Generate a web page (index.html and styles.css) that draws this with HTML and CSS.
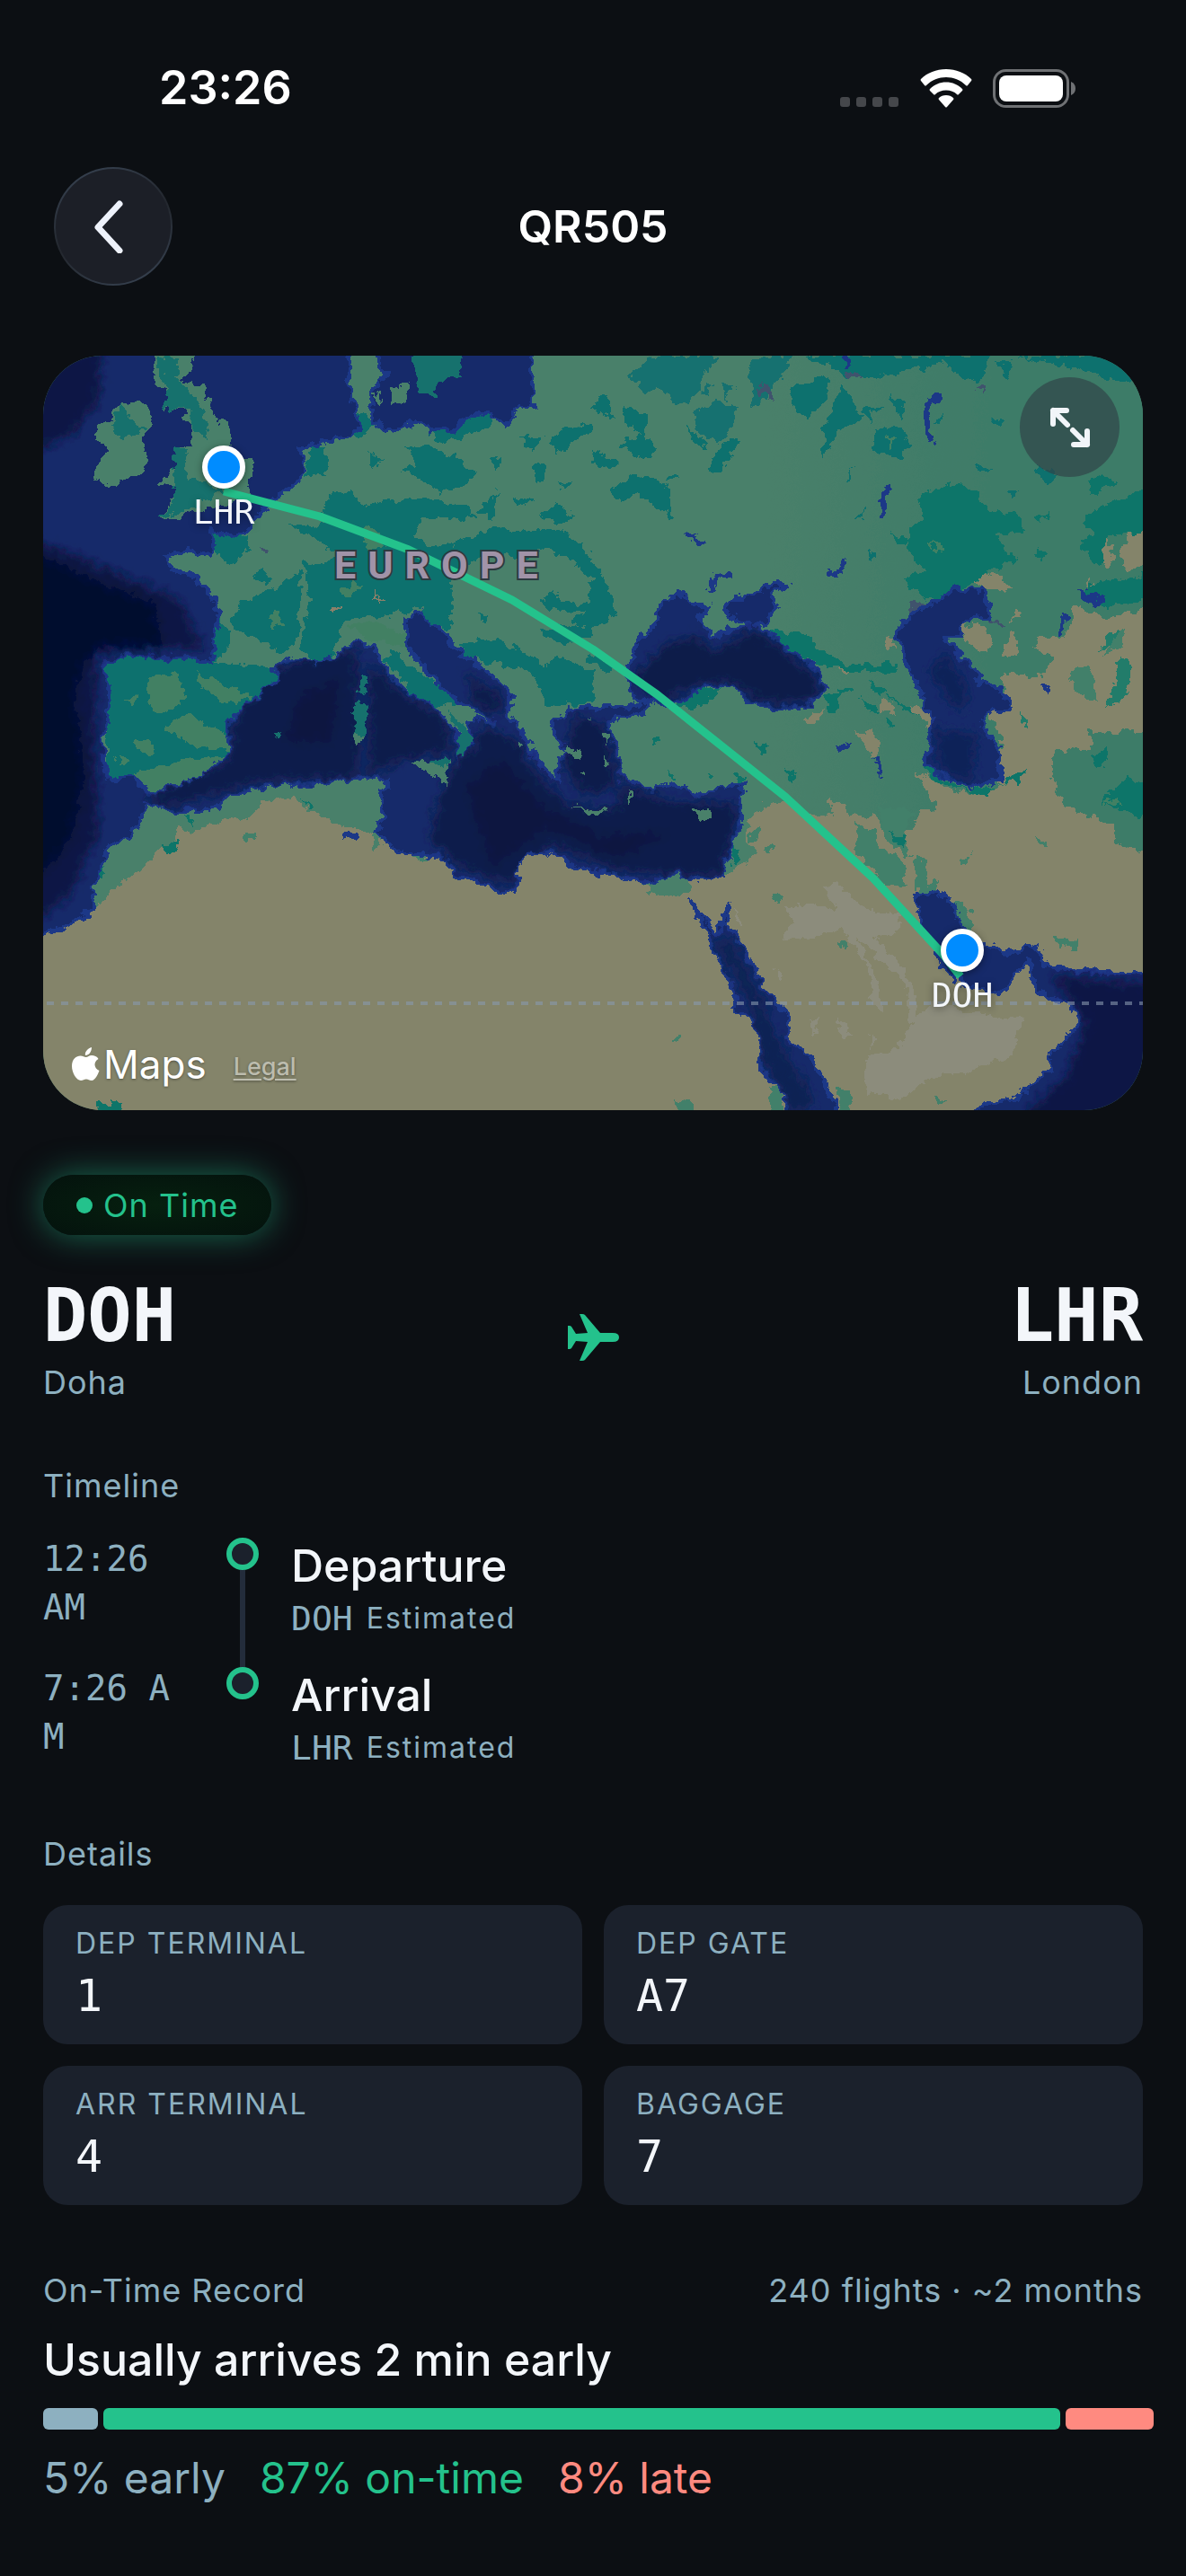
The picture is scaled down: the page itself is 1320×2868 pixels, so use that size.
FILE: index.html
```html
<!DOCTYPE html>
<html lang="en">
<head>
    <meta charset="UTF-8">
    <meta name="viewport" content="width=device-width, initial-scale=1.0">
    <title>QR505</title>
    <link rel="stylesheet" href="styles.css">
</head>
<body>
    <div class="status-bar">
        <span class="clock">23:26</span>
        <div class="status-icons">
            <svg width="66" height="43" viewBox="0 0 66 43" fill="#45474b">
                <rect x="0" y="31" width="11" height="11" rx="3"/>
                <rect x="18" y="31" width="11" height="11" rx="3"/>
                <rect x="36" y="31" width="11" height="11" rx="3"/>
                <rect x="54" y="31" width="11" height="11" rx="3"/>
            </svg>
            <svg width="58" height="43" viewBox="0 0 58 43" fill="#fff">
                <path d="M29 0C40 0 50 4 57 11Q58 12 57 13L53 18Q52 19 51 18C45 12 37 9 29 9S13 12 7 18Q6 19 5 18L1 13Q0 12 1 11C8 4 18 0 29 0Z"/>
                <path d="M29 14.500C36 14.500 42 17 47 22Q48 23 47 24L43 28Q42 29 41 28C38 25 34 23.500 29 23.500S20 25 17 28Q16 29 15 28L11 24Q10 23 11 22C16 17 22 14.500 29 14.500Z"/>
                <path d="M29 29Q34 29 37 32Q38 33 37 34L30 42Q29 43 28 42L21 34Q20 33 21 32Q24 29 29 29Z"/>
            </svg>
            <svg width="93" height="43" viewBox="0 0 93 43">
                <rect x="1.500" y="1.500" width="82" height="40" rx="13" fill="none" stroke="#6f7174" stroke-width="3"/>
                <rect x="7" y="7" width="71" height="29" rx="8" fill="#fff"/>
                <path d="M87 14Q92 16 92 21.500T87 29Z" fill="#6f7174"/>
            </svg>
        </div>
    </div>

    <header class="nav">
        <button class="back" aria-label="Back">
            <svg width="36" height="60" viewBox="0 0 36 60" fill="none" stroke="#eef2fb" stroke-width="7" stroke-linecap="round" stroke-linejoin="round">
                <path d="M30 5L6 31L30 57"/>
            </svg>
        </button>
        <h1>QR505</h1>
    </header>

    <main>
        <div class="map">
            <svg class="map-canvas" viewBox="0 0 1224 840" preserveAspectRatio="xMidYMid slice">
                <defs>
                    <filter id="rough" x="0" y="0" width="100%" height="100%">
                        <feTurbulence type="fractalNoise" baseFrequency="0.09" numOctaves="3" seed="4"/>
                        <feDisplacementMap in="SourceGraphic" scale="15" xChannelSelector="R" yChannelSelector="G"/>
                    </filter>
                    <filter id="soft" x="-20%" y="-20%" width="140%" height="140%">
                        <feGaussianBlur stdDeviation="6"/>
                    </filter>
                    <linearGradient id="land" x1="0" y1="0" x2="1" y2="0">
                        <stop offset="0.65" stop-color="#49806a"/>
                        <stop offset="0.85" stop-color="#3e7b68"/>
                    </linearGradient>
                    <clipPath id="water">
                        <use href="#ocean"/>
                        <use href="#black-sea"/>
                        <use href="#caspian"/>
                        <use href="#red-sea"/>
                        <use href="#gulf"/>
                    </clipPath>
                </defs>

                <rect width="1224" height="840" fill="#49806a"/>
                <g filter="url(#rough)" shape-rendering="crispEdges">
                    <rect x="-20" y="-20" width="1264" height="880" fill="url(#land)"/>

                    <!-- desert -->
                    <g fill="#84846a">
                        <path d="M-20 650L60 612L73 599L111 572L130 552L150 536L150 522L162 532L190 521L229 516L245 496L277 492L296 506L328 522L366 529L370 552L387 530L440 530L620 550L680 600L704 603L720 596L720 575L760 579L776 567L792 556L782 536L786 519L802 499L833 497L857 512L877 512L877 494L893 499L897 512L924 512L936 529L968 529L972 509L996 506L988 492L970 462L1007 482L1031 489L1059 482L1102 462L1122 452L1126 486L1146 506L1193 522L1193 542L1244 560V860H-20Z"/>
                        <path d="M1051 397L1067 424L1065 478L1102 465L1126 455L1126 442L1170 436L1160 419L1244 419V277L1205 287L1185 294L1170 288L1150 277L1146 294L1138 314L1110 314L1102 327L1122 334L1118 354L1094 357L1071 351L1067 364L1077 391Z"/>
                        <path d="M1031 247L1037 240L1071 247L1075 263L1051 261Z"/>
                        <path d="M1244 194L1209 196L1196 221L1209 241L1244 227Z"/>
                        <path d="M1181 204L1190 212L1187 237L1173 227ZM1165 245L1170 270L1160 262Z"/>
                        <path d="M1021 299L1049 301L1059 321L1051 331L1027 319ZM1084 278L1088 290L1078 296ZM1075 308L1084 311L1083 334L1067 336Z"/>
                        <path d="M859 337L880 338L905 350L890 352ZM935 313L950 314L944 325ZM912 419L924 419L930 432L924 450ZM848 404L872 390L866 402L852 412ZM900 417L930 425L918 430ZM930 383L944 386L946 400L930 396ZM965 391L985 395L994 415L985 412Z"/>
                    </g>

                    <!-- green inside the desert -->
                    <g fill="#43806a">
                        <path d="M905 522L924 529L928 542L960 566L960 591L936 589L903 556Z"/>
                        <path d="M932 500L968 509L958 530L966 560L945 545L932 530ZM970 556L982 566L982 590L998 584L996 602L974 600Z"/>
                        <path d="M800 544L816 544L810 554ZM812 600L824 602L820 610L810 606ZM1010 610L1025 608L1036 632L1028 642L1018 625ZM1022 560L1034 554L1030 566L1020 568ZM1125 646L1152 650L1148 660L1130 656ZM882 652L898 652L894 662ZM700 762L710 756L706 766ZM705 828L724 832L722 844L708 842ZM884 816L896 818L902 844L888 844ZM810 814L822 816L822 844L808 844ZM992 828L1004 826L998 836ZM223 530L240 530L238 540L226 538ZM1104 536L1116 540L1112 546ZM784 530L796 528L798 538L786 540ZM1190 310L1205 305L1200 325L1180 335ZM1142 350L1165 345L1175 385L1150 375ZM408 553L444 556L416 562Z"/>
                    </g>
                    <path d="M1190 370L1200 335L1210 345L1205 385L1185 390ZM1176 328L1186 308L1196 304L1192 320ZM1085 395L1098 412L1090 410Z" fill="#217b6a"/>

                    <!-- light sand -->
                    <g fill="#8c8c7b">
                        <path d="M988 719L1040 732L1090 739L1081 779L1031 796L984 804L956 829L916 819V782L952 769L968 742Z"/>
                        <path d="M867 589L885 589L916 619L956 622L952 646L924 646L968 696L974 739L964 742L960 699L905 646L928 696L936 732L924 729L920 686L889 636L857 649H820L837 629L822 616L857 609L885 619Z"/>
                        <path d="M850 736L862 740L858 758ZM886 732L900 758L888 756ZM920 756L926 760L924 772ZM812 680L824 690L820 694ZM768 616L780 636L774 638Z"/>
                    </g>

                    <!-- forest -->
                    <g fill="#0a716e">
                        <path d="M316 154L344 151L356 167L391 161L435 161L470 167L482 181L451 181L419 181L415 201L431 214L466 207L486 197L502 191L526 194L573 194L597 207L612 227L612 247L585 227L553 214L538 227L502 221L478 227L455 247L455 304L431 302L423 281L372 291L336 294L328 314L320 341L300 344L296 331L285 324L292 294L296 271L288 227L304 234L332 221L269 187L308 191Z"/>
                        <path d="M217 277L245 264L288 241L285 294L281 321L265 331L241 314L209 304ZM196 294L207 307V324L190 341ZM186 194L225 201L229 211L213 234L202 227L188 217ZM235 240L248 236L250 254L235 252Z"/>
                        <path d="M67 344L91 330L162 333L213 344L261 347L261 364L233 384L207 404V442L178 466L122 488L99 469L71 475L73 364Z"/>
                        <path d="M378 337L387 331L427 357L462 387L435 391L411 377Z"/>
                        <path d="M360 107L380 117L364 126ZM399 101L423 101L459 111L482 134L466 147L439 154L427 141L399 127L419 121ZM431 84L474 71L502 62L498 77L466 91L443 97ZM528 91L557 89L546 107ZM563 94L573 84L612 74L612 84L585 97L573 111ZM546 121L561 121L553 144L546 137ZM482 171L506 151L502 181ZM522 157L549 161L530 167ZM553 177L573 164L593 181L573 187ZM496 116L510 112L506 124ZM575 141L592 138L580 148Z"/>
                        <path d="M553 274L569 261L581 274L612 277L601 284L577 287ZM612 231L628 254L638 287L612 304L590 300L606 280ZM458 321L506 314L538 331L557 347L577 334L612 354V387L565 391L538 347L506 344L474 337ZM549 304L580 300L612 304V314L573 322ZM480 285L498 290L496 300ZM600 330L640 345L625 355Z"/>
                        <path d="M300 101H316L314 134H292ZM350 60L368 78L355 92L345 90Z"/>
                        <path d="M849 0H1053L1047 27L1023 26L1003 8L920 26L895 24L877 12ZM830 37L873 21L875 47L849 69L833 54ZM889 31L912 67L877 94L867 117L869 81ZM912 60L922 58L920 78ZM648 54L671 67L673 94L648 74ZM640 101L663 87L685 101L671 117ZM612 107L640 117L636 126L612 121ZM630 151L652 132L671 134L697 147L699 182L675 164L663 154L642 161ZM692 140L702 132L708 140ZM928 81L956 81L968 101L952 116L924 104ZM940 41L960 57L956 71ZM612 60L625 38L634 70ZM894 132L905 122L898 130L896 140ZM900 182L916 168L912 180ZM914 220L932 222L924 227ZM715 80L735 92L738 102L725 98ZM742 124L756 98L774 92L768 108L752 130Z"/>
                        <path d="M1087 0H1181L1224 20V30L1180 24L1120 8ZM1062 8L1080 6L1072 24ZM1106 124L1126 131L1116 149ZM1035 120L1056 126L1050 130ZM1056 70L1072 74L1064 80ZM1073 150L1090 152L1080 158ZM990 75L1004 64L998 76ZM918 60L938 58L930 64Z"/>
                    </g>
                    <g fill="#187170">
                        <path d="M679 0H750L719 54L703 51L683 37L671 41L652 24ZM782 11L810 0H833L828 14L798 54L786 57L794 37ZM723 64L750 51L774 57L762 91L750 97L727 84ZM732 40L745 32L740 45ZM755 28L768 34L762 50Z"/>
                    </g>
                    <g fill="#0e7469">
                        <path d="M972 157L1023 141L1039 151L1051 174H1083L1092 197H1059L1071 214L1083 227L1047 244L1031 254L992 274L964 261L960 244L984 241L964 217V194L980 181Z"/>
                        <path d="M1165 141L1181 131L1193 144L1165 154ZM1156 184L1166 174L1205 157L1244 137V194L1181 201L1177 234L1152 212L1170 197ZM1166 254L1244 241V264L1185 281L1158 271ZM1106 180L1120 174L1110 186ZM1106 215L1114 218L1112 232Z"/>
                        <path d="M802 307L845 309L873 331L897 344L948 344V352L905 351L857 344L833 327ZM918 362L940 372L930 378ZM885 370L900 370L890 376ZM910 378L930 395L920 398ZM935 374L975 400L960 396ZM870 380L890 372L880 400ZM940 402L950 415L940 412ZM940 195L965 205L958 212Z"/>
                        <path d="M699 391L727 374L758 369L727 394ZM676 424L684 426L680 434ZM693 460L706 472L702 474ZM790 430L808 436L800 446ZM825 460L836 466L834 476ZM738 466L748 468L744 474ZM770 468L780 466L774 478Z"/>
                        <path d="M1177 499L1205 469L1244 482V519L1200 505ZM1166 446L1185 436L1177 459ZM982 440L990 456L1003 472L1031 484L1059 479L1047 491L992 474L980 462ZM1067 474L1094 459L1087 476ZM942 530L960 536L956 548ZM768 545L776 560L766 570Z"/>
                        <path d="M158 511L168 515L165 525ZM130 544L150 540L146 554ZM290 494L300 500L296 504ZM55 575L70 570L65 582ZM60 832H88V844H60Z"/>
                    </g>
                    <g fill="#428064">
                        <path d="M115 357L150 354L158 381L142 397L119 394ZM170 354L233 381L205 387L178 371ZM134 414L162 397L174 407L207 424L205 439L182 439L166 434ZM99 466L150 452L202 447L174 474L122 486ZM90 384L106 380L100 390ZM80 446L94 450L86 458ZM100 430L120 428L122 445L110 440Z"/>
                        <path d="M984 85L996 80L990 95ZM938 88L948 92L942 104ZM984 205L1002 212L998 220ZM330 265L345 252L356 258L340 268ZM1180 500L1195 490L1200 500ZM352 190L372 196L380 215L360 214ZM250 290L262 284L268 300L255 306ZM340 300L372 295L400 310L410 290L420 285L405 325L385 322L350 310Z"/>
                    </g>
                    <path d="M318 280L332 278L322 288ZM364 270H378V272H364ZM371 262H373V276H371Z" fill="#8a8069"/>
                    <path d="M240 212L252 218L248 224ZM800 28L808 32L812 48L798 42ZM895 14L914 26L896 24ZM1035 34L1052 32L1050 40L1036 38ZM966 274L992 274L962 294ZM1045 288L1072 300L1066 304Z" fill="#41536d"/>

                    <!-- water -->
                    <g fill="#182c6b" stroke="#1f3787" stroke-width="4">
                        <path id="ocean" d="M549 -20L544 4L546 57L528 59L518 76L502 71L496 62L474 69L459 82L433 84L421 72L391 84L366 74L364 41L381 21L371 12V-20H342L340 41L350 56L352 81L340 91L302 99L287 104L292 117L289 131L280 144L253 161L233 187L213 202L186 194L190 207L186 221L162 217L136 224L144 239L166 244L180 261L194 277V294L188 341L158 337L91 334L67 344L73 364V411L65 424L71 471L99 469L117 484L124 488L144 479L170 474L186 462L200 449L207 442V404L233 384L261 364L259 347L273 336L300 342H314L336 327L348 317L364 322L375 337L387 357L411 379L435 391L447 407L462 421V449L478 432L472 407L482 401L502 412L494 401L466 387L447 374L427 351L405 324L403 292L423 286L431 302L447 306L458 327L474 337L506 361L522 377L518 399L528 414L538 426L547 449L573 474V448L585 446L573 429L565 404L581 402L585 394L612 391L642 391L675 386L671 397L648 402L628 407L634 424L638 436L646 471L663 476L681 487L693 476L711 481L727 491L750 481L780 476L776 499V522L764 552L756 579L731 584L703 577L675 587L648 582L628 576L612 575L585 566L565 552L542 554L528 569L526 592L514 599L502 594L459 579L449 559L407 554L387 546L368 529L381 512L375 486L385 474L364 469L324 472L285 479L269 474L237 481L205 492L186 507H142L130 501H115L99 534L71 547L65 569L55 592L57 616L35 629L20 639L-20 650V-20Z"/>
                        <path id="black-sea" d="M648 347L661 327L663 314L677 304L683 284L695 269L715 266L723 277L742 279L740 287L729 291L740 304L744 317L762 304L786 301L782 296L764 291L759 277L770 271L794 264L806 256L831 254L810 266L816 279L804 296L794 299L810 311L833 329L865 354L871 371L853 391H810L790 387L778 376L762 367H739L715 381L691 389L659 382L650 361Z"/>
                        <path id="caspian" d="M950 314L960 291L992 274L1015 259L1047 261L1054 277L1051 291L1025 296L1019 302L1023 314L1007 316L1023 337L1043 354V366L1063 367L1077 391L1071 396L1049 397L1047 411L1051 422L1063 429L1065 472L1035 481L1003 469L982 456L988 419L990 407L980 381L964 354L960 327Z"/>
                        <path id="red-sea" d="M721 607L735 624L746 641L754 642L756 622L762 614L760 637L768 639L786 672L802 702L822 726L829 739L827 762L853 779L869 806L889 850H827L825 822L800 797L796 759L790 742L772 729L770 709L748 666L738 642Z"/>
                        <path id="gulf" d="M970 601L990 597L1007 602L1017 622L1023 639L1047 656L1075 666L1106 656L1114 679L1166 687H1244V860H1035V840L1055 832L1083 826L1102 812L1120 796V779L1138 762L1155 739L1138 719L1114 714L1102 699L1098 674L1083 689L1067 709L1043 707L1023 699L1021 686L1013 696L1001 679L998 666L976 632Z"/>
                    </g>
                    <g clip-path="url(#water)">
                        <g filter="url(#soft)" shape-rendering="auto">
                            <path d="M-20 10L65 -10L62 50L30 90L-20 110ZM-20 200L80 240L150 270L180 325L60 332L58 440L62 530L30 600L-20 640Z" fill="#0b1644"/>
                            <path d="M-20 214L71 256L122 275L134 325L63 322L45 345L34 380L42 424L46 470L30 540L-20 600Z" fill="#010c2e"/>
                            <path d="M262 345L340 328L350 325L352 470L240 475L130 505L115 490L205 450L215 400ZM362 340L400 375L445 400L458 440L400 450L362 470ZM460 450L478 435L490 410L530 430L545 460L585 500L640 505L640 480L700 495L775 500L755 580L640 575L565 545L520 590L465 570L430 540L440 490ZM470 350L515 385L510 400L480 390ZM590 400L625 410L640 480L600 490L580 460Z" fill="#0e1b4b"/>
                            <path d="M470 480L510 450L560 505L620 535L700 530L640 560L560 525L500 570ZM285 380L330 360L320 430L270 430Z" fill="#0d143f"/>
                            <path d="M655 360L690 322L725 310L745 330L790 305L822 325L865 362L858 388L800 386L762 363L725 368L690 386Z" fill="#0d1b49"/>
                            <path d="M985 350L1005 330L1030 370L1025 400L1010 390ZM990 415L1040 420L1035 475L1000 465Z" fill="#0d2358"/>
                            <path d="M745 650L768 650L800 715L820 765L860 830L835 850L800 780L785 720Z" fill="#0d2052"/>
                            <path d="M1120 690L1244 700V860H1075L1140 800L1160 740Z" fill="#0c1644"/>
                        </g>
                    </g>

                    <!-- islands and peninsulas -->
                    <g fill="#49806a">
                        <path d="M122 -20L174 -10L166 14L154 29L178 32L186 54L190 66L207 81L209 101L213 109L235 117L233 134L225 149L233 156L205 167L166 172L150 181L128 182L144 161L166 154L156 147L130 144L134 134L146 127L144 106L164 102L166 81L156 67V59L132 61L138 41L124 27Z"/>
                        <path d="M87 52H115L122 77L111 87L114 117L109 131L75 147L57 137V121L73 107L59 87L57 76L77 71V61Z"/>
                        <path d="M387 37L407 29L405 51L387 54ZM366 42L379 47L374 56Z"/>
                        <path d="M409 451L427 452L451 449L449 476L431 467ZM587 501L612 504L632 508L612 511ZM721 509L742 504L744 511L733 518ZM345 424L358 424L354 431L345 432Z"/>
                        <path d="M582 432L600 444L596 450L580 440ZM622 420L632 424L628 432ZM624 446L632 450L628 454ZM650 486L658 490L650 496ZM604 404L612 402L610 408ZM600 462L606 464L602 468ZM528 428L534 434L530 438Z"/>
                    </g>
                    <g fill="#15716d">
                        <path d="M411 -20H468L464 24L439 26L435 46L419 41L415 24Z"/>
                        <path d="M124 4L150 1L148 24L174 54L186 94L166 81L162 57L132 61L138 40ZM144 106L160 107L162 137L182 144L202 151L182 161L154 174L128 182L146 161ZM85 52L111 84L87 97L77 77Z"/>
                        <path d="M354 354L361 361L358 377L350 374ZM344 391L360 386L362 397L358 424L346 424ZM430 450L451 447L449 460ZM256 419L263 419L260 426ZM447 394L462 404L476 424L478 430L462 449L464 420Z"/>
                    </g>

                    <!-- lakes -->
                    <g fill="none" stroke="#1f3787" stroke-width="6">
                        <path d="M895 -5V11M1000 46L986 48L982 72L988 97M940 142L936 155L934 179M717 198L735 209M740 262L748 246L768 244M895 224L888 238L877 244M1138 287L1130 312M881 437L899 434M927 449L932 467M334 535H350"/>
                        <path d="M1160 267L1179 270L1172 277ZM1112 364L1120 374Z"/>
                    </g>
                </g>

                <path d="M4 721H1224" stroke="#8797ad" stroke-opacity="0.600" stroke-width="4" stroke-dasharray="8 8"/>
                <path d="M201 151L308 179L407 216L522 272L612 327L683 377L742 424L826 491L924 582L1001 666L1021 691" fill="none" stroke="#24c28c" stroke-width="9" stroke-linejoin="round"/>
                <text class="region" x="324" y="248">EUROPE</text>

                <g class="pin">
                    <circle cx="201" cy="124" r="21" fill="#008cff" stroke="#fff" stroke-width="6"/>
                    <text x="201" y="187">LHR</text>
                    <circle cx="1023" cy="662" r="21" fill="#008cff" stroke="#fff" stroke-width="6"/>
                    <text x="1023" y="725">DOH</text>
                </g>
            </svg>
            <button class="expand" aria-label="Expand map">
                <svg width="48" height="48" viewBox="0 0 48 48" fill="none" stroke="#f1f5f9" stroke-width="6" stroke-linecap="round" stroke-linejoin="round">
                    <path d="M5 20V5H20M5 5L21 21M43 28V43H28M43 43L27 27"/>
                </svg>
            </button>
            <div class="map-credit">
                <svg width="31" height="38" viewBox="0 0 31 38" fill="#fff">
                    <path d="M22 0C22 5 19 9 15 9C14 5 18 1 22 0ZM15.500 11C18 11 19 9 22 9C25 9 28 10 29.500 13C24 16 24 23 30.500 26C29 30 26 37 22 37C19 37 18.500 35.500 16 35.500S12.500 37 10 37C5 37 0 28 0 21C0 13 5 9.500 9.500 9.500C12 9.500 14 11 15.500 11Z"/>
                </svg>
                <span class="maps">Maps</span>
                <a class="legal" href="#legal">Legal</a>
            </div>
        </div>

        <div class="badge"><span class="dot"></span>On Time</div>

        <section class="route">
            <div>
                <div class="code">DOH</div>
                <div class="label">Doha</div>
            </div>
            <svg class="plane" width="57" height="52" viewBox="0 0 57 52" fill="#24c28c">
                <path d="M57 26Q57 31 50 31H36L19 51Q18 52 16 52H13L22 31L9 30L4 38Q3 39 2 39H0V13H2Q3 13 4 14L9 22L22 21L13 0H16Q18 0 19 1L36 21H50Q57 21 57 26Z"/>
            </svg>
            <div class="arrival">
                <div class="code">LHR</div>
                <div class="label">London</div>
            </div>
        </section>

        <section class="timeline">
            <h2 class="label">Timeline</h2>
            <ol>
                <li>
                    <time>12:26 AM</time>
                    <span class="track"></span>
                    <div class="event">
                        <h3>Departure</h3>
                        <p><span class="mono">DOH</span> <span class="small">Estimated</span></p>
                    </div>
                </li>
                <li>
                    <time>7:26 AM</time>
                    <span class="track"></span>
                    <div class="event">
                        <h3>Arrival</h3>
                        <p><span class="mono">LHR</span> <span class="small">Estimated</span></p>
                    </div>
                </li>
            </ol>
        </section>

        <section class="details">
            <h2 class="label">Details</h2>
            <dl>
                <div class="card"><dt>DEP TERMINAL</dt><dd>1</dd></div>
                <div class="card"><dt>DEP GATE</dt><dd>A7</dd></div>
                <div class="card"><dt>ARR TERMINAL</dt><dd>4</dd></div>
                <div class="card"><dt>BAGGAGE</dt><dd>7</dd></div>
            </dl>
        </section>

        <section class="record">
            <div class="record-head">
                <h2 class="label">On-Time Record</h2>
                <span class="label">240 flights · ~2 months</span>
            </div>
            <p class="summary">Usually arrives 2 min early</p>
            <div class="bar">
                <span class="early" style="width: 5%"></span>
                <span class="ontime" style="width: 87%"></span>
                <span class="late" style="width: 8%"></span>
            </div>
            <div class="legend">
                <span class="early-text">5% early</span>
                <span class="ontime-text">87% on-time</span>
                <span class="late-text">8% late</span>
            </div>
        </section>
    </main>
</body>
</html>
```
FILE: styles.css
```css
*, *::before, *::after {
    box-sizing: border-box;
    margin: 0;
    padding: 0;
}
body {
    background: #0c0f13;
    color: #f3f6fa;
    font-family: Inter, sans-serif;
    font-size: 50px;
    line-height: 60px;
}
button {
    border: none;
    cursor: pointer;
    display: flex;
    align-items: center;
    justify-content: center;
    border-radius: 50%;
}
h1, h2, h3 {
    font-size: inherit;
    font-weight: 600;
}

/* status bar + nav */
.status-bar {
    display: flex;
    align-items: center;
    justify-content: space-between;
    padding: 65px 122px 55px 177px;
}
.clock {
    color: #fff;
    font-size: 52px;
    line-height: 66px;
    font-weight: 600;
}
.status-icons {
    display: flex;
    gap: 23px;
}
.nav {
    display: grid;
    grid-template-columns: 1fr auto 1fr;
    align-items: center;
    padding: 0 60px;
}
.nav h1 {
    color: #fff;
}
.back {
    width: 132px;
    height: 132px;
    padding-right: 10px;
    background: linear-gradient(#1c1f27, #1c1f27) padding-box, linear-gradient(155deg, #3a4656, #23272e 50%, #3a4656) border-box;
    border: 2px solid transparent;
}
main {
    padding: 78px 48px 90px;
}

/* map */
.map {
    position: relative;
    aspect-ratio: 1224 / 840;
    border-radius: 66px;
    overflow: hidden;
}
.map-canvas {
    display: block;
    width: 100%;
    height: 100%;
}
.region {
    fill: #a193a8;
    stroke: #2c3a40;
    stroke-width: 4px;
    paint-order: stroke;
    font-family: Roboto, sans-serif;
    font-size: 43px;
    font-weight: 700;
    letter-spacing: 13px;
}
.pin {
    filter: drop-shadow(0 2px 4px rgba(0, 0, 0, 0.4));
}
.pin text {
    fill: #f3f6fa;
    font-family: "DejaVu Sans Mono", monospace;
    font-size: 38px;
    text-anchor: middle;
}
.expand {
    position: absolute;
    top: 24px;
    right: 26px;
    width: 111px;
    height: 111px;
    background: rgba(48, 68, 72, 0.7);
}
.map-credit {
    position: absolute;
    left: 32px;
    bottom: 18px;
    display: flex;
    align-items: center;
    gap: 4px;
    color: #fff;
    text-shadow: 0 1px 3px rgba(0, 0, 0, 0.4);
}
.legal {
    margin: 6px 0 0 26px;
    color: #bcbcae;
    font-size: 27px;
    font-weight: 500;
    text-underline-offset: 4px;
}
.maps {
    font-size: 44px;
}

/* flight */
.badge {
    display: inline-flex;
    align-items: center;
    gap: 12px;
    height: 67px;
    margin-top: 72px;
    padding: 0 37px;
    border-radius: 34px;
    background: radial-gradient(#06200f, #04120d);
    box-shadow: 0 0 36px rgba(36, 194, 140, 0.5);
    color: #24c28c;
    font-size: 36px;
    letter-spacing: 1px;
    vertical-align: top;
}
.dot {
    width: 18px;
    height: 18px;
    border-radius: 50%;
    background: #24c28c;
}
.label {
    color: #8db0c0;
    font-size: 36px;
    line-height: 48px;
    font-weight: 400;
    letter-spacing: 1px;
}
.route {
    display: grid;
    grid-template-columns: 1fr auto 1fr;
    align-items: center;
    margin-top: 40px;
}
.code {
    font-family: "DejaVu Sans Mono", monospace;
    font-size: 82px;
    line-height: 100px;
    font-weight: 700;
}
.arrival {
    text-align: right;
}
.timeline {
    margin-top: 67px;
}
.timeline ol {
    list-style: none;
    margin-top: 31px;
}
.timeline li {
    display: grid;
    grid-template-columns: 156px 36px 1fr;
    column-gap: 48px;
    min-height: 144px;
}
.timeline li:last-child {
    min-height: 118px;
}
.timeline h3 {
    line-height: 68px;
    font-weight: 500;
}
.event {
    margin-left: -12px;
}
.timeline p {
    display: flex;
    align-items: center;
    gap: 15px;
    color: #8db0c0;
    line-height: 50px;
}
time {
    color: #8db0c0;
    font-family: "DejaVu Sans Mono", monospace;
    font-size: 39px;
    line-height: 54px;
    word-break: break-all;
}
.track {
    display: flex;
    flex-direction: column;
    align-items: center;
    padding-top: 3px;
    margin-bottom: -4px;
}
.track::before {
    content: "";
    flex: none;
    width: 36px;
    height: 36px;
    border: 6px solid #24c28c;
    border-radius: 50%;
    background: #1b212c;
}
.track::after {
    content: "";
    flex: 1;
    width: 6px;
    background: #232c3b;
}
li:last-child .track::after {
    display: none;
}
.mono {
    font-family: "DejaVu Sans Mono", monospace;
    font-size: 38px;
}
.small {
    font-size: 32px;
    letter-spacing: 2px;
}
.details {
    margin-top: 69px;
}
.details dl {
    display: grid;
    grid-template-columns: 1fr 1fr;
    gap: 24px;
    margin-top: 33px;
}
.card {
    padding: 23px 36px 24px;
    border-radius: 27px;
    background: #1b212c;
}
.card dt {
    margin-bottom: 8px;
    color: #8db0c0;
    font-size: 32px;
    line-height: 40px;
    letter-spacing: 2px;
}
.card dd {
    font-family: "DejaVu Sans Mono", monospace;
}

/* on-time record */
.record {
    margin-top: 71px;
}
.record-head {
    display: flex;
    justify-content: space-between;
}
.summary {
    margin-top: 23px;
    font-weight: 500;
}
.bar {
    display: flex;
    gap: 6px;
    margin-top: 24px;
}
.bar span {
    flex: none;
    height: 24px;
    border-radius: 6px;
}
.legend {
    display: flex;
    gap: 38px;
    margin-top: 24px;
    font-size: 48px;
}
.early {
    background: #8db0c0;
}
.ontime {
    background: #24c28c;
}
.late {
    background: #ff8a80;
}
.early-text {
    color: #8db0c0;
}
.ontime-text {
    color: #24c28c;
}
.late-text {
    color: #ff8a80;
}
```
